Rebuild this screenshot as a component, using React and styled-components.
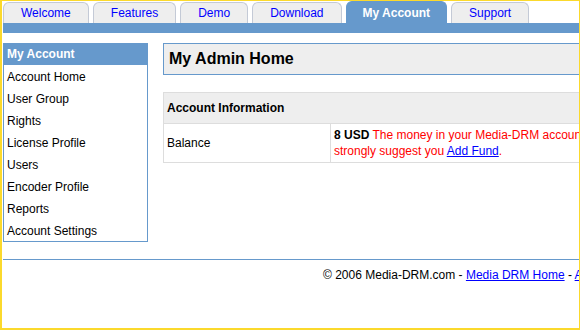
import React from "react";
import styled, { createGlobalStyle } from "styled-components";

const GlobalStyle = createGlobalStyle`
  body {
    margin: 0;
    font-family: "Liberation Sans", Arial, sans-serif;
    font-size: 12px;
    color: #000;
    background: #fff;
  }
`;

const Frame = styled.div`
  box-sizing: border-box;
  width: 580px;
  height: 330px;
  overflow: hidden;
  border-style: solid;
  border-color: #fbd92c;
  border-width: 1px 1px 2px 2px;
`;

const Page = styled.div`
  width: 800px;
  padding-left: 1px;
`;

const TabBar = styled.div`
  display: flex;
  align-items: flex-end;
  gap: 4px;
  height: 22px;
`;

const Tab = styled.a`
  box-sizing: border-box;
  display: flex;
  align-items: center;
  height: ${(p) => (p.$active ? "22px" : "21px")};
  padding: 0 ${(p) => (p.$active ? "16px" : "17px")};
  border: 1px solid ${(p) => (p.$active ? "#6699cc" : "#c4cad6")};
  border-bottom: none;
  border-radius: 6px 6px 0 0;
  background: ${(p) => (p.$active ? "#6699cc" : "#eeeeee")};
  color: ${(p) => (p.$active ? "#ffffff" : "#0000ff")};
  font-weight: ${(p) => (p.$active ? "bold" : "normal")};
  font-size: 12px;
  text-decoration: none;
  white-space: nowrap;
`;

const BlueBar = styled.div`
  height: 10px;
  background: #6699cc;
`;

const Body = styled.div`
  display: flex;
  align-items: flex-start;
  gap: 15px;
  margin-top: 10px;
`;

const Sidebar = styled.div`
  box-sizing: border-box;
  width: 145px;
  flex-shrink: 0;
  border: 1px solid #6699cc;
`;

const SideHeader = styled.div`
  height: 21px;
  line-height: 21px;
  padding-left: 3px;
  background: #6699cc;
  color: #fff;
  font-weight: bold;
`;

const SideItem = styled.div`
  box-sizing: border-box;
  height: 22px;
  padding: 1px 0 0 3px;
  line-height: 22px;
  white-space: nowrap;
`;

const Main = styled.div`
  flex: 1;
`;

const TitleBox = styled.div`
  height: 30px;
  line-height: 30px;
  padding-left: 5px;
  border: 1px solid #6699cc;
  background: #eeeeee;
  font-size: 16px;
  font-weight: bold;
`;

const InfoTable = styled.table`
  width: 100%;
  margin-top: 17px;
  border-collapse: collapse;
  border: 1px solid #dddddd;
`;

const HeadCell = styled.th`
  height: 30px;
  padding: 0 3px;
  background: #eeeeee;
  border: 1px solid #dddddd;
  text-align: left;
  font-size: 12px;
`;

const Cell = styled.td`
  padding: 3px 3px;
  border: 1px solid #dddddd;
  line-height: 16px;
  vertical-align: middle;
  width: ${(p) => p.$width || "auto"};
`;

const Warn = styled.span`
  color: #ff0000;
`;

const Link = styled.a`
  color: #0000ff;
  text-decoration: underline;
`;

const Footer = styled.div`
  margin-top: 17px;
  border-top: 1px solid #6699cc;
  padding: 8px 0 0 320px;
  font-size: 12px;
  line-height: 14px;
  white-space: nowrap;
`;

const tabs = ["Welcome", "Features", "Demo", "Download", "My Account", "Support"];
const menu = [
  "Account Home",
  "User Group",
  "Rights",
  "License Profile",
  "Users",
  "Encoder Profile",
  "Reports",
  "Account Settings",
];

export default function App() {
  return (
    <>
      <GlobalStyle />
      <Frame>
        <Page>
          <TabBar>
            {tabs.map((t) => (
              <Tab key={t} $active={t === "My Account"}>
                {t}
              </Tab>
            ))}
          </TabBar>
          <BlueBar />
          <Body>
            <Sidebar>
              <SideHeader>My Account</SideHeader>
              {menu.map((m) => (
                <SideItem key={m}>{m}</SideItem>
              ))}
            </Sidebar>
            <Main>
              <TitleBox>My Admin Home</TitleBox>
              <InfoTable>
                <thead>
                  <tr>
                    <HeadCell colSpan={2}>Account Information</HeadCell>
                  </tr>
                </thead>
                <tbody>
                  <tr>
                    <Cell $width="160px">Balance</Cell>
                    <Cell>
                      <b>8 USD</b>{" "}
                      <Warn>
                        The money in your Media-DRM account is running low, we
                        <br />
                        strongly suggest you <Link>Add Fund</Link>.
                      </Warn>
                    </Cell>
                  </tr>
                </tbody>
              </InfoTable>
            </Main>
          </Body>
          <Footer>
            © 2006 Media-DRM.com - <Link>Media DRM Home</Link> -{" "}
            <Link>About Us</Link>
          </Footer>
        </Page>
      </Frame>
    </>
  );
}
